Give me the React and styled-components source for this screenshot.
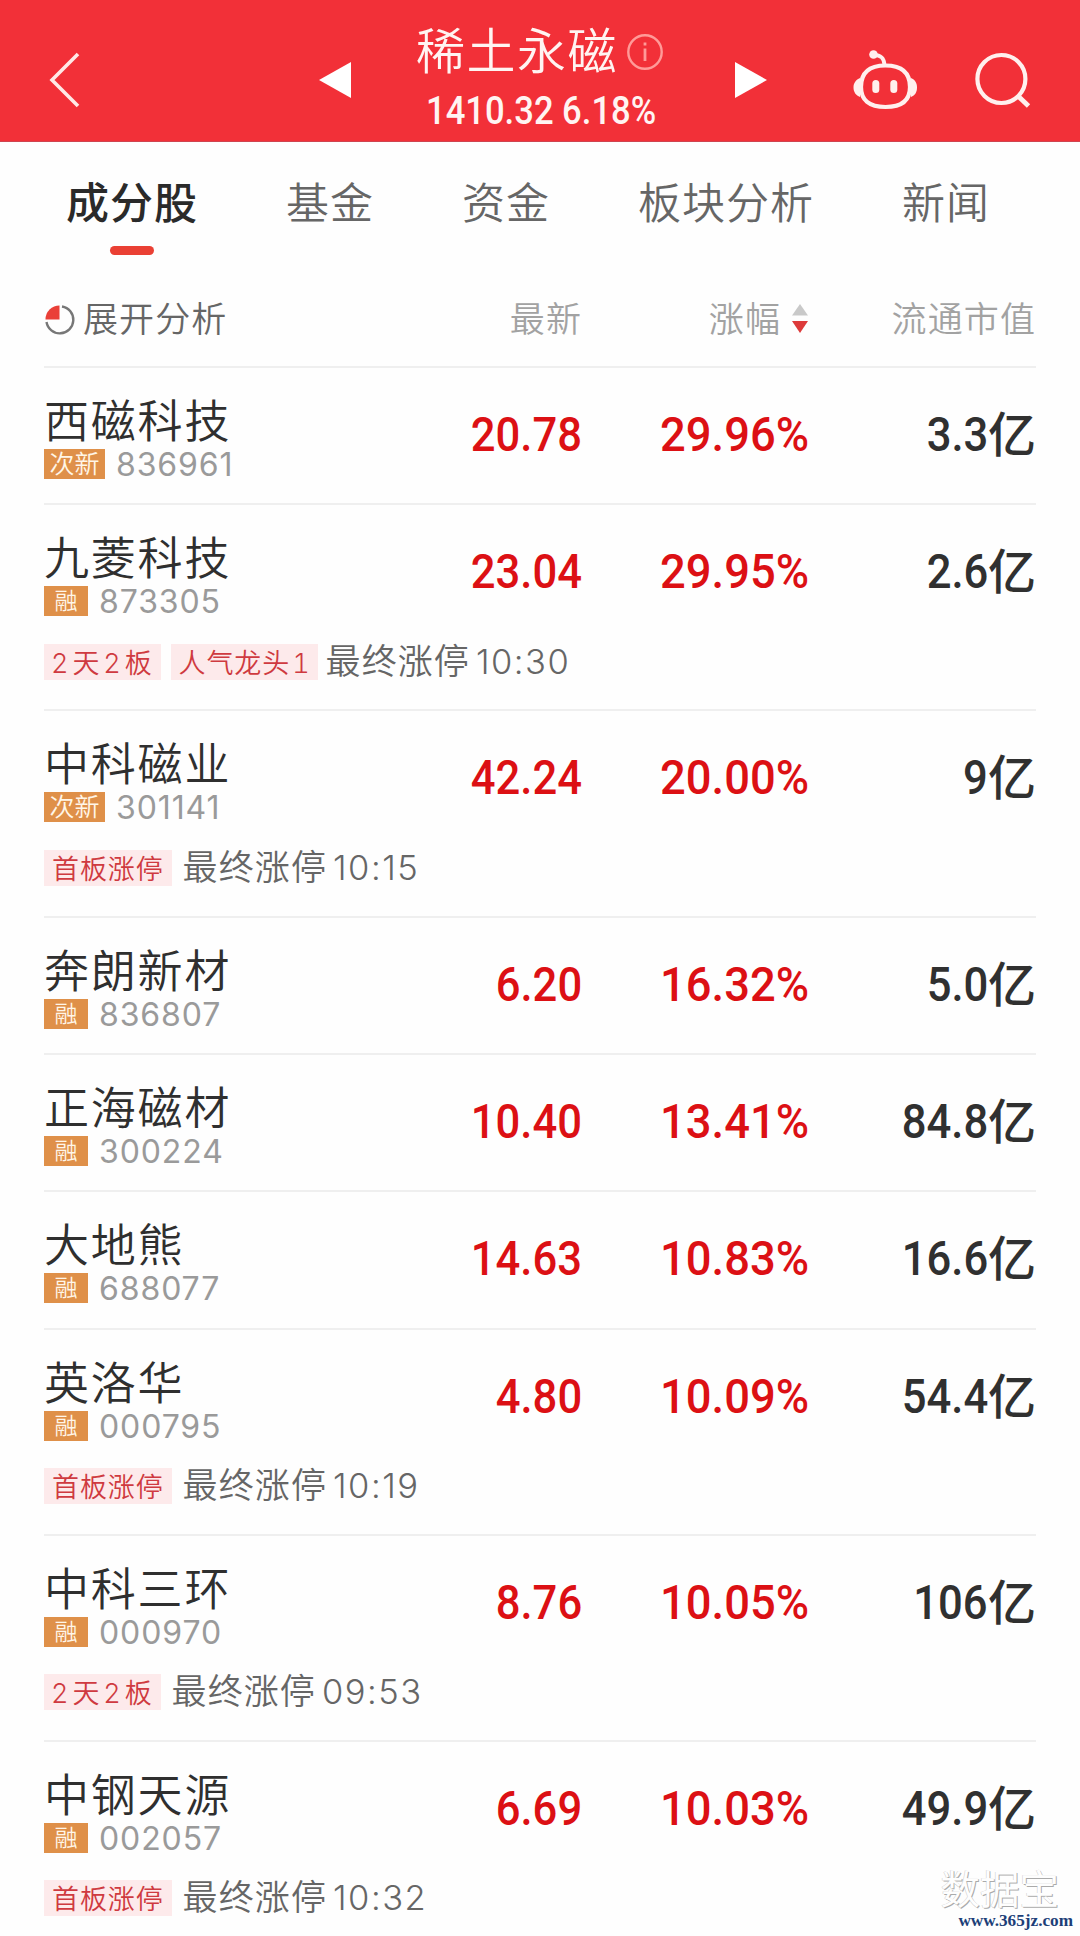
import React, { useState } from 'react';
import styled, { createGlobalStyle } from 'styled-components';

const tabs = ['成分股', '基金', '资金', '板块分析', '新闻'];

const stocks = [
  { name: '西磁科技', badge: '次新', code: '836961', price: '20.78', change: '29.96%', cap: '3.3' },
  { name: '九菱科技', badge: '融', code: '873305', price: '23.04', change: '29.95%', cap: '2.6', tags: ['2天2板', '人气龙头1'], time: '10:30' },
  { name: '中科磁业', badge: '次新', code: '301141', price: '42.24', change: '20.00%', cap: '9', tags: ['首板涨停'], time: '10:15' },
  { name: '奔朗新材', badge: '融', code: '836807', price: '6.20', change: '16.32%', cap: '5.0' },
  { name: '正海磁材', badge: '融', code: '300224', price: '10.40', change: '13.41%', cap: '84.8' },
  { name: '大地熊', badge: '融', code: '688077', price: '14.63', change: '10.83%', cap: '16.6' },
  { name: '英洛华', badge: '融', code: '000795', price: '4.80', change: '10.09%', cap: '54.4', tags: ['首板涨停'], time: '10:19' },
  { name: '中科三环', badge: '融', code: '000970', price: '8.76', change: '10.05%', cap: '106', tags: ['2天2板'], time: '09:53' },
  { name: '中钢天源', badge: '融', code: '002057', price: '6.69', change: '10.03%', cap: '49.9', tags: ['首板涨停'], time: '10:32' },
];

function RobotIcon() {
  return (
    <svg width="66" height="60" viewBox="0 0 66 60" fill="none">
      <path d="M33.500 15.500C50 15.500 58 23 58 37C58 50 50 57 33.500 57C17 57 9 50 9 37C9 23 17 15.500 33.500 15.500Z" stroke="#fff0ee" strokeWidth="4.200" />
      <path d="M8 28C4 29.500 1.500 33 1.500 37.500C1.500 42 4 45.500 8 47ZM59 28C63 29.500 65 33 65 37.500C65 42 63 45.500 59 47Z" fill="#fff0ee" />
      <path d="M22 5C29 5 32 8 32.500 15" stroke="#fff0ee" strokeWidth="3.800" />
      <circle cx="21.500" cy="4.500" r="4.300" fill="#fff0ee" />
      <rect x="20.300" y="30" width="7" height="13" rx="3.500" fill="#fff0ee" />
      <rect x="38.300" y="30" width="7" height="13" rx="3.500" fill="#fff0ee" />
    </svg>
  );
}

function App() {
  const [tab, setTab] = useState('成分股');

  const tagText = (text) => text.split(/(\d)/).filter(Boolean).map((part, i, all) => (
    /\d/.test(part)
      ? <Digit key={i} $first={i === 0} $last={i === all.length - 1}>{part}</Digit>
      : part
  ));

  return (
    <Page>
      <GlobalStyle />
      <Header>
        <IconButton $left={47}>
          <svg width="36" height="58" viewBox="0 0 36 58" fill="none">
            <path d="M31 3L5 29L31 55" stroke="#ffe9e6" strokeWidth="3.600" />
          </svg>
        </IconButton>
        <IconButton $left={236}>
          <svg width="32" height="36" viewBox="0 0 32 36"><path d="M0 18L32 0V36Z" fill="#fff" /></svg>
        </IconButton>
        <Heading>
          <Title>
            稀土永磁
            <svg width="36" height="38" viewBox="0 0 36 38" fill="none" stroke="#ff9a98">
              <circle cx="18" cy="19" r="16.700" strokeWidth="2.400" />
              <path d="M18 15.500V28M18 9.500V12.500" strokeWidth="2.800" />
            </svg>
          </Title>
          <Quote>1410.32 6.18%</Quote>
        </Heading>
        <IconButton $left={0}>
          <svg width="32" height="36" viewBox="0 0 32 36"><path d="M32 18L0 0V36Z" fill="#fff" /></svg>
        </IconButton>
        <IconButton $left={85}>
          <RobotIcon />
        </IconButton>
        <IconButton $left={56}>
          <svg width="60" height="58" viewBox="0 0 60 58" fill="none" stroke="#fff0ee">
            <circle cx="27.400" cy="28" r="24" strokeWidth="4.200" />
            <path d="M44 45L54.500 55" strokeWidth="4.800" />
          </svg>
        </IconButton>
      </Header>

      <Tabs>
        {tabs.map((t) => (
          <Tab key={t} $active={t === tab} onClick={() => setTab(t)}>{t}</Tab>
        ))}
      </Tabs>

      <List>
        <HeadRow>
          <Expand>
            <svg width="32" height="32" viewBox="0 0 32 32">
              <path d="M18 2.500A13.500 13.500 0 1 1 2.500 18" fill="none" stroke="#777" strokeWidth="2.400" />
              <path d="M15.500 15.500H1.500A14 14 0 0 1 15.500 1.500Z" fill="#ea4038" />
            </svg>
            展开分析
          </Expand>
          <HeadCell>最新</HeadCell>
          <HeadCell>
            涨幅
            <svg width="16" height="30" viewBox="0 0 16 30">
              <path d="M8 0L16 11.500H0Z" fill="#c9c9c9" />
              <path d="M8 29L0 17H16Z" fill="#dd3b3b" />
            </svg>
          </HeadCell>
          <HeadCell>流通市值</HeadCell>
        </HeadRow>

        {stocks.map((s) => (
          <Row key={s.code} $tall={!!s.tags}>
            <Main>
              <div>
                <Name>{s.name}</Name>
                <Meta>
                  <Badge $wide={s.badge.length > 1}>{s.badge}</Badge>
                  <Code>{s.code}</Code>
                </Meta>
              </div>
              <Cell><Num>{s.price}</Num></Cell>
              <Cell><Num $wide>{s.change}</Num></Cell>
              <Cell $dark><Num>{s.cap}</Num><Unit>亿</Unit></Cell>
            </Main>
            {s.tags && (
              <Notes>
                {s.tags.map((t) => <Tag key={t}>{tagText(t)}</Tag>)}
                <Note $tight={s.tags.length > 1}>最终涨停<Time>{s.time}</Time></Note>
              </Notes>
            )}
          </Row>
        ))}
      </List>

      <Watermark>
        <Brand>数据宝</Brand>
        <Site>www.365jz.com</Site>
      </Watermark>
    </Page>
  );
}

const GlobalStyle = createGlobalStyle`
  * {
    box-sizing: border-box;
  }
  body {
    margin: 0;
    background: #fefefe;
  }
`;
const Page = styled.div`
  position: relative;
  width: 1080px;
  height: 1936px;
  overflow: hidden;
  background: #fefefe;
  font-family: 'Noto Sans CJK SC', sans-serif;
  font-weight: 350;
  color: #2f2f2f;
`;
const Header = styled.header`
  display: flex;
  height: 142px;
  background: #f23038;
  border-bottom: 1px solid #cf4450;
`;
const IconButton = styled.button`
  display: flex;
  align-items: center;
  height: 160px;
  margin-left: ${(p) => p.$left}px;
  padding: 0;
  background: none;
  border: none;
  cursor: pointer;
`;
const Heading = styled.div`
  width: 384px;
  padding-left: 65px;
  color: #fff4f2;
`;
const Title = styled.h1`
  display: flex;
  align-items: center;
  gap: 9px;
  height: 60px;
  margin: 18px 0 0;
  font-size: 49px;
  font-weight: 350;
  letter-spacing: 1.500px;
  line-height: 60px;
  white-space: nowrap;

  svg {
    margin-top: 8px;
  }
`;
const Quote = styled.div`
  width: max-content;
  margin: 11px 0 0 10px;
  font: 500 38px/44px Roboto, sans-serif;
  transform: scaleX(0.91);
  transform-origin: left;
`;
const Tabs = styled.nav`
  display: flex;
  gap: 88px;
  height: 125px;
  padding: 28px 0 0 66px;
`;
const Tab = styled.button`
  display: flex;
  flex-direction: column;
  align-items: center;
  height: 85px;
  padding: 0;
  background: none;
  border: none;
  color: ${(p) => (p.$active ? '#2a2a2a' : '#666')};
  font-family: inherit;
  font-size: 43px;
  font-weight: ${(p) => (p.$active ? 500 : 350)};
  letter-spacing: 1px;
  line-height: 60px;
  cursor: pointer;

  &::after {
    content: '';
    width: 44px;
    height: 9px;
    margin-top: 16px;
    border-radius: 5px;
    background: ${(p) => (p.$active ? '#ea4034' : 'transparent')};
  }
`;
const List = styled.main`
  padding: 0 44px;
`;
const HeadRow = styled.div`
  display: grid;
  grid-template-columns: 312px 226px 226px 228px;
  align-items: center;
  height: 101px;
  border-bottom: 2px solid #efefef;
  font-size: 35px;
  letter-spacing: 1.100px;
`;
const Expand = styled.div`
  display: flex;
  align-items: center;
  gap: 7px;
  color: #666;

  svg {
    margin-top: 6px;
  }
`;
const HeadCell = styled.div`
  display: flex;
  align-items: center;
  justify-content: flex-end;
  gap: 11px;
  color: #a2a2a2;

  svg {
    margin-top: 4px;
  }
`;
const Row = styled.section`
  height: ${(p) => (p.$tall ? 206.1 : 137.35)}px;
  border-bottom: 2px solid #efefef;
`;
const Main = styled.div`
  display: grid;
  grid-template-columns: 312px 226px 226px 228px;
  height: 137px;
`;
const Name = styled.div`
  height: 81px;
  padding-top: 24px;
  font-size: 45px;
  letter-spacing: 1.800px;
  line-height: 54px;
`;
const Meta = styled.div`
  display: flex;
  align-items: center;
  gap: 11px;
  height: 30px;
`;
const Badge = styled.span`
  width: ${(p) => (p.$wide ? 61 : 44)}px;
  height: 30px;
  background: #df9049;
  color: #fff6e8;
  font-size: ${(p) => (p.$wide ? 25 : 23)}px;
  line-height: 27px;
  text-align: center;
`;
const Code = styled.span`
  margin-top: 2px;
  color: #9a9a9a;
  font: 380 32px/32px Inter, sans-serif;
  letter-spacing: 0.900px;
`;
const Cell = styled.div`
  display: flex;
  align-items: center;
  justify-content: flex-end;
  height: 134px;
  color: ${(p) => (p.$dark ? '#303030' : '#dc1014')};
`;
const Num = styled.span`
  margin-right: ${(p) => (p.$wide ? -1 : 0)}px;
  font: 500 49px/60px Roboto, sans-serif;
  transform: scaleX(${(p) => (p.$wide ? 0.925 : 0.89)});
  transform-origin: right;
`;
const Unit = styled.span`
  margin-top: -8px;
  font-size: 48px;
  font-weight: 500;
  line-height: 60px;
`;
const Notes = styled.div`
  display: flex;
  align-items: center;
  gap: 10px;
  height: 39px;
  white-space: nowrap;
`;
const Tag = styled.span`
  height: 36px;
  padding: 0 8px;
  background: #fdeaeb;
  color: #cf3a40;
  font-family: Inter, 'Noto Sans CJK SC', sans-serif;
  font-size: 27px;
  letter-spacing: 0.900px;
  line-height: 40px;
`;
const Digit = styled.span`
  margin: 0 ${(p) => (p.$last ? -1 : 3)}px 0 ${(p) => (p.$first ? -1 : p.$last ? 2 : 3)}px;
  font-variant-numeric: tabular-nums;
`;
const Note = styled.span`
  margin: -3px 0 0 ${(p) => (p.$tight ? -2 : 1)}px;
  color: #666;
  font-size: 35px;
  letter-spacing: 1.100px;
  line-height: 40px;
`;
const Time = styled.span`
  margin-left: 6px;
  font-family: Inter, sans-serif;
  font-size: 34.500px;
  letter-spacing: 1.500px;
`;
const Watermark = styled.div`
  position: absolute;
  right: 7px;
  bottom: 5px;
  display: flex;
  flex-direction: column;
  align-items: flex-end;
`;
const Brand = styled.span`
  margin: 0 14px 2px 0;
  color: #fefefe;
  font-size: 39.500px;
  font-weight: 400;
  line-height: 44px;
  text-shadow: 1px 1px 0 #aaa, -0.500px -0.500px 0 #ccc;
`;
const Site = styled.span`
  color: #1d3f78;
  font: bold 17.200px/20px 'Liberation Serif', serif;
`;

export default App;
